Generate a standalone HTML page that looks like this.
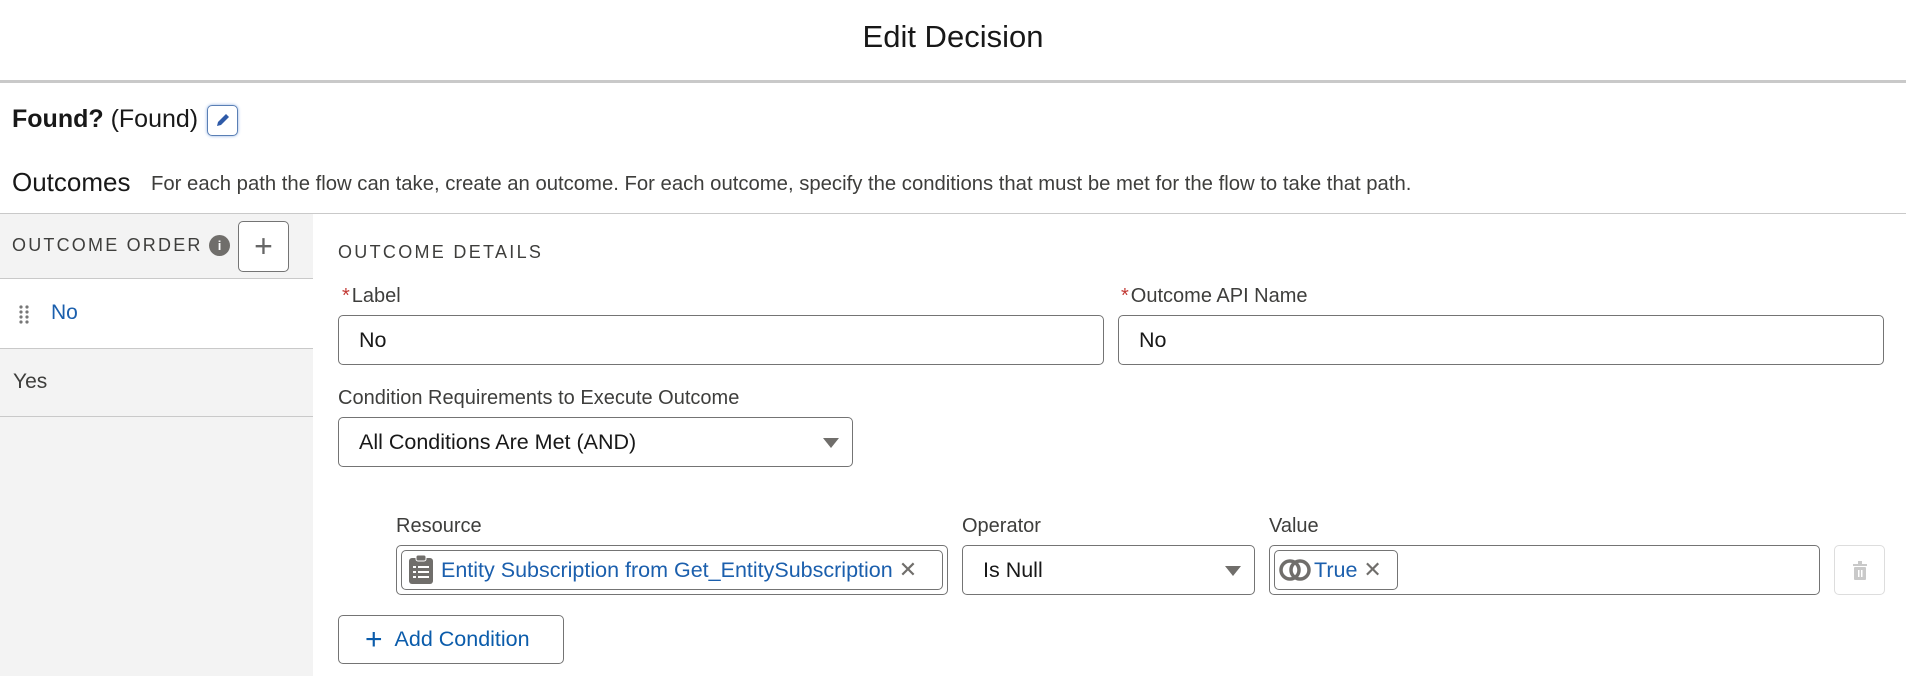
<!DOCTYPE html>
<html><head><meta charset="utf-8"><style>
*{box-sizing:border-box;margin:0;padding:0}
body{width:1906px;height:676px;overflow:hidden;background:#fff;font-family:"Liberation Sans",sans-serif;color:#181818;position:relative}
.a{position:absolute}
.lbl{font-size:20px;color:#3e3e3c}
.inp{position:absolute;border:1px solid #747474;border-radius:5px;background:#fff;font-size:21.5px;display:flex;align-items:center;padding-left:20px}
.req{color:#c23934;margin-right:2px}
</style></head><body>
<div class="a" style="left:0;top:0;width:1906px;height:83px;border-bottom:3px solid #c9c9c9;text-align:center;line-height:74px;font-size:31px">Edit Decision</div>
<div class="a" style="left:12px;top:105px;font-size:25px"><b>Found?</b> (Found)</div>
<div class="a" style="left:207px;top:105px;width:31px;height:31px;border:1px solid #5a7fb5;border-radius:5px;box-shadow:0 0 3px #8fb0e0">
<svg width="29" height="29" viewBox="0 0 29 29"><path d="M9 20 L10 16 L18 8 L21 11 L13 19 Z" fill="#2e5aa8"/></svg></div>
<div class="a" style="left:12px;top:167px;font-size:26px">Outcomes</div>
<div class="a" style="left:151px;top:173px;font-size:20.3px;color:#3e3e3c">For each path the flow can take, create an outcome. For each outcome, specify the conditions that must be met for the flow to take that path.</div>
<div class="a" style="left:0;top:213px;width:1906px;height:1px;background:#c9c9c9"></div>
<div class="a" style="left:0;top:214px;width:313px;height:462px;background:#f3f3f3"></div>
<div class="a" style="left:12px;top:235px;font-size:18px;letter-spacing:2.2px;color:#3e3e3c">OUTCOME ORDER</div>
<div class="a" style="left:209px;top:235px;width:21px;height:21px;border-radius:50%;background:#706e6b;color:#fff;font-size:13px;font-weight:bold;text-align:center;line-height:21px">i</div>
<div class="a" style="left:238px;top:221px;width:51px;height:51px;border:1px solid #747474;border-radius:5px;background:#fff;text-align:center;line-height:48px;font-size:32px;color:#666;font-weight:300">+</div>
<div class="a" style="left:0;top:278px;width:313px;height:71px;background:#fff;border-top:1px solid #c9c9c9;border-bottom:1px solid #c9c9c9"></div>
<svg class="a" style="left:18px;top:304px" width="14" height="22"><g fill="#777"><circle cx="3" cy="3" r="1.6"/><circle cx="9" cy="3" r="1.6"/><circle cx="3" cy="8" r="1.6"/><circle cx="9" cy="8" r="1.6"/><circle cx="3" cy="13" r="1.6"/><circle cx="9" cy="13" r="1.6"/><circle cx="3" cy="18" r="1.6"/><circle cx="9" cy="18" r="1.6"/></g></svg>
<div class="a" style="left:51px;top:301px;font-size:21px;color:#1b5fad">No</div>
<div class="a" style="left:13px;top:370px;font-size:21px;color:#3e3e3c">Yes</div>
<div class="a" style="left:0;top:416px;width:313px;height:1px;background:#c9c9c9"></div>
<div class="a" style="left:338px;top:242px;font-size:18px;letter-spacing:2.3px;color:#3e3e3c">OUTCOME DETAILS</div>
<div class="a lbl" style="left:342px;top:285px"><span class="req">*</span>Label</div>
<div class="inp" style="left:338px;top:315px;width:766px;height:50px">No</div>
<div class="a lbl" style="left:1121px;top:285px"><span class="req">*</span>Outcome API Name</div>
<div class="inp" style="left:1118px;top:315px;width:766px;height:50px">No</div>
<div class="a lbl" style="left:338px;top:387px">Condition Requirements to Execute Outcome</div>
<div class="inp" style="left:338px;top:417px;width:515px;height:50px">All Conditions Are Met (AND)<svg class="a" style="right:12px;top:19px" width="18" height="12"><path d="M1 1 H17 L9 11 Z" fill="#706e6b"/></svg></div>
<div class="a lbl" style="left:396px;top:515px">Resource</div>
<div class="a lbl" style="left:962px;top:515px">Operator</div>
<div class="a lbl" style="left:1269px;top:515px">Value</div>
<div class="inp" style="left:396px;top:545px;width:552px;height:50px;padding:4px">
<div style="border:1px solid #747474;border-radius:5px;height:40px;width:100%;display:flex;align-items:center;padding-left:4px;color:#1b5fad;font-size:21.5px;white-space:nowrap;overflow:hidden">
<svg width="30" height="32" viewBox="0 0 30 32" style="flex:none"><rect x="3" y="4" width="24" height="26" rx="3" fill="#706e6b"/><rect x="10" y="1" width="10" height="6" rx="2" fill="#706e6b" stroke="#fff"/><g fill="#fff"><rect x="7" y="12" width="3" height="2"/><rect x="12" y="12" width="11" height="2"/><rect x="7" y="17" width="3" height="2"/><rect x="12" y="17" width="11" height="2"/><rect x="7" y="22" width="3" height="2"/><rect x="12" y="22" width="11" height="2"/></g></svg>
<span style="margin-left:5px">Entity Subscription from Get_EntitySubscription</span><span style="color:#706e6b;margin-left:6px;font-size:22px">✕</span></div></div>
<div class="inp" style="left:962px;top:545px;width:293px;height:50px">Is Null<svg class="a" style="right:12px;top:19px" width="18" height="12"><path d="M1 1 H17 L9 11 Z" fill="#706e6b"/></svg></div>
<div class="inp" style="left:1269px;top:545px;width:551px;height:50px;padding:4px">
<div style="border:1px solid #747474;border-radius:5px;height:40px;width:124px;display:flex;align-items:center;padding-left:4px;color:#1b5fad;font-size:21.5px">
<svg width="32" height="26" viewBox="0 0 32 26"><circle cx="11" cy="13" r="9" fill="none" stroke="#706e6b" stroke-width="3.5"/><circle cx="21" cy="13" r="9" fill="none" stroke="#706e6b" stroke-width="3.5"/></svg>
<span style="margin-left:3px">True</span><span style="color:#706e6b;margin-left:6px;font-size:22px">✕</span></div></div>
<div class="a" style="left:1834px;top:545px;width:51px;height:50px;border:1px solid #ddd;border-radius:5px">
<svg class="a" style="left:17px;top:15px" width="16" height="20"><rect x="1" y="3" width="14" height="2" fill="#c9c9c9"/><rect x="6" y="0" width="4" height="3" fill="#c9c9c9"/><rect x="2" y="6" width="12" height="13" rx="1" fill="#c9c9c9"/><rect x="6" y="9" width="1.5" height="7" fill="#fff"/><rect x="9" y="9" width="1.5" height="7" fill="#fff"/></svg></div>
<div class="a" style="left:338px;top:615px;width:226px;height:49px;border:1px solid #747474;border-radius:5px;display:flex;align-items:center;padding-left:26px;color:#0b5cab;font-size:21.5px"><span style="font-size:30px;font-weight:300;margin-right:12px;line-height:1">+</span>Add Condition</div>
</body></html>
